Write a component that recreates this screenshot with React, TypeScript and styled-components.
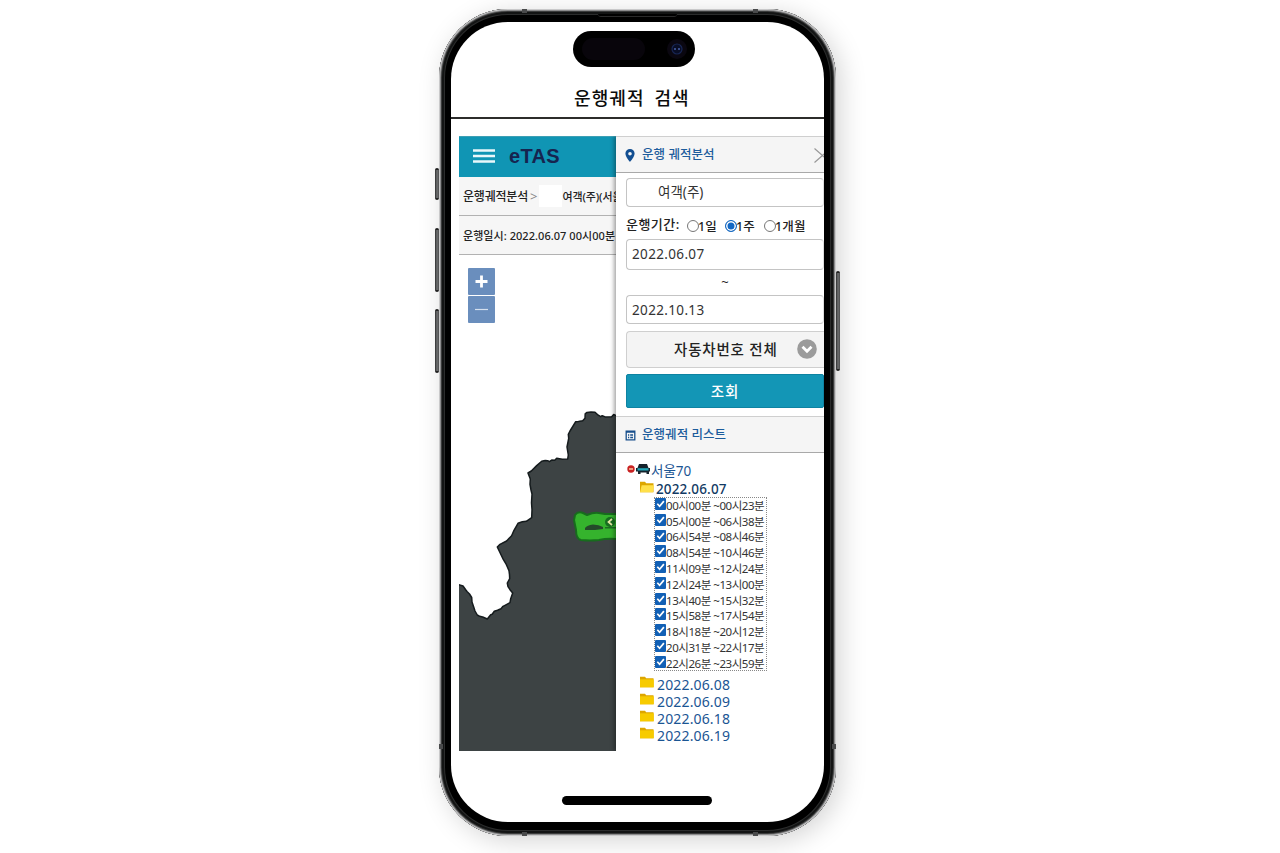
import React from 'react';
import styled, { createGlobalStyle } from 'styled-components';

const GlobalStyle = createGlobalStyle`
  * { box-sizing: border-box; }
  body { margin: 0; background: #fff; overflow: hidden; font-family: "Noto Sans", "Noto Sans CJK KR", sans-serif; color: #222; }
`;

const Page = styled.main`
  width: 1280px;
  height: 853px;
  padding: 9px 0 0 439px;
  overflow: hidden;
`;

const Phone = styled.div`
  position: relative;
  width: 397px;
  height: 827px;
  padding: 13px 12px 14px;
  border-radius: 69px;
  background: #000;
  border: 0;
  box-shadow:
    inset 0 0 0 1px #c9c9ca,
    inset 0 0 0 2px #8c8c8d,
    inset 0 0 0 3px #3a3b3b,
    inset 0 0 0 5px #131414,
    inset 0 0 0 6px #2b2c2c,
    5px 5px 26px rgba(0, 0, 0, 0.17);
`;

const SideKey = styled.i<{ $side: 'left' | 'right'; $top: number; $height: number }>`
  position: absolute;
  ${(p) => p.$side}: -4px;
  top: ${(p) => p.$top}px;
  width: 4px;
  height: ${(p) => p.$height}px;
  border-radius: 2px;
  background: linear-gradient(90deg, #2b2c2d, #707172 50%, #4b4c4d);
  border-top: 2px solid #222;
  border-bottom: 2px solid #222;
`;

const AntennaV = styled.i<{ $left: number; $bottom?: boolean }>`
  position: absolute;
  left: ${(p) => p.$left}px;
  ${(p) => (p.$bottom ? 'bottom' : 'top')}: 0;
  width: 5px;
  height: 4px;
  background: #4a4b4c;
`;

const AntennaH = styled.i<{ $side: 'left' | 'right' }>`
  position: absolute;
  ${(p) => p.$side}: 0;
  top: 735px;
  width: 4px;
  height: 5px;
  background: #4a4b4c;
`;

const Speaker = styled.i`
  position: absolute;
  left: 159px;
  top: 5px;
  width: 79px;
  height: 3px;
  border-radius: 0 0 3px 3px;
  background: #000;
  border-bottom: 1px solid #2a2a2a;
`;

const Screen = styled.div`
  display: flex;
  flex-direction: column;
  width: 373px;
  height: 800px;
  border-radius: 57px;
  background: #fff;
  overflow: hidden;
`;

const Island = styled.div`
  position: absolute;
  left: 134px;
  top: 22px;
  width: 122px;
  height: 36px;
  border-radius: 18px;
  background: #000;
  display: flex;
  align-items: center;
  justify-content: space-between;
  padding: 0 8px 0 9px;
`;

const Sensor = styled.span`
  width: 63px;
  height: 22px;
  border-radius: 11px;
  background: #08050b;
`;

const TitleBar = styled.header`
  flex: none;
  height: 97px;
  padding: 63px 0 0 123px;
  border-bottom: 2px solid #2c2c2a;
`;

const Title = styled.h1`
  margin: 0;
  font-size: 18px;
  line-height: 27px;
  font-weight: 500;
  letter-spacing: 1.1px;
  word-spacing: 4px;
  color: #0c0c0c;
  white-space: pre;
`;

const Content = styled.div`
  flex: none;
  display: flex;
  height: 615px;
  margin: 17px 0 0 8px;
  overflow: hidden;
`;

const MapPane = styled.section`
  position: relative;
  flex: none;
  width: 157px;
  display: flex;
  flex-direction: column;
  overflow: hidden;
`;

const BrandBar = styled.div`
  flex: none;
  height: 41px;
  display: flex;
  align-items: center;
  gap: 14px;
  padding: 0 0 2px 14px;
  background: #1095b4;
  border-top: 1px solid #3d9fb4;
`;

const Brand = styled.span`
  font: bold 20px/24px "Liberation Sans", sans-serif;
  letter-spacing: 0.35px;
  color: #16244f;
`;

const InfoRow = styled.div<{ $spacing: number }>`
  flex: none;
  height: 39px;
  display: flex;
  align-items: center;
  padding-left: 4px;
  background: #f6f6f6;
  border-bottom: 1px solid #b2b2b2;
  white-space: nowrap;
  font-size: 11px;
  font-weight: 500;
  letter-spacing: ${(p) => p.$spacing}px;
  color: #222;
`;

const Crumb = styled.b`
  font-weight: 500;
  font-size: 12px;
  letter-spacing: -0.2px;
`;

const CrumbArrow = styled.span`
  margin-left: 2px;
  font-size: 13px;
  font-weight: 400;
  color: #888;
`;

const Blank = styled.span`
  flex: none;
  width: 23px;
  height: 22px;
  margin: 0 0 0 2px;
  background: #fff;
`;

const MapArea = styled.div`
  position: relative;
  flex: 1;
`;

const ZoomStack = styled.div`
  position: absolute;
  left: 9px;
  top: 13px;
  display: grid;
  gap: 1px;
`;

const ZoomButton = styled.button`
  display: grid;
  place-items: center;
  width: 27px;
  height: 27px;
  padding: 0;
  border: 0;
  border-radius: 1px;
  background: #6a8ebd;
`;

const Panel = styled.aside`
  position: relative;
  flex: 1;
  background: #fff;
  box-shadow: -2px 0 4px rgba(0, 0, 0, 0.35);
`;

const PanelHead = styled.div<{ $height: number }>`
  display: flex;
  align-items: center;
  height: ${(p) => p.$height}px;
  padding: 1px 0 0 9px;
  background: #f5f5f5;
  border-top: 1px solid #cfcfcf;
  border-bottom: 1px solid #a9a9a9;
  overflow: hidden;
`;

const HeadIcon = styled.span`
  display: flex;
  flex: none;
  width: 17px;
`;

const HeadText = styled.h2`
  flex: 1;
  margin: 0;
  font-size: 12.5px;
  line-height: 18px;
  font-weight: 500;
  letter-spacing: 0.05px;
  color: #1c5c9c;
  white-space: nowrap;
`;

const Form = styled.div`
  display: flex;
  flex-direction: column;
  padding: 5px 0 8px 10px;
`;

const Field = styled.div<{ $height: number; $indent?: number; $drop?: number; $spacing?: number }>`
  display: flex;
  align-items: center;
  height: ${(p) => p.$height}px;
  padding: 0 0 ${(p) => p.$drop ?? 2}px ${(p) => p.$indent ?? 5}px;
  border: 1px solid #c4c4c4;
  border-right-color: #ddd;
  border-radius: 4px;
  font-size: 13.5px;
  letter-spacing: ${(p) => p.$spacing ?? 0.35}px;
  color: #333;
  white-space: nowrap;
`;

const Period = styled.div`
  display: flex;
  align-items: center;
  height: 32px;
  padding-top: 4px;
  font-size: 12.5px;
  white-space: nowrap;
`;

const PeriodLabel = styled.span`
  width: 60px;
  margin-top: -4px;
  font-size: 13px;
  font-weight: 500;
  letter-spacing: 0.45px;
`;

const Choice = styled.label<{ $width: number }>`
  display: flex;
  align-items: center;
  width: ${(p) => p.$width}px;
  font-weight: 500;
  letter-spacing: 0.2px;
`;

const Radio = styled.i<{ $on?: boolean }>`
  display: block;
  flex: none;
  width: 12px;
  height: 12px;
  margin: 2px -1px 0 1px;
  border-radius: 50%;
  border: 1px solid ${(p) => (p.$on ? '#1769c0' : '#777')};
  background: ${(p) => (p.$on ? '#1267c4' : '#fff')};
  box-shadow: inset 0 0 0 1.5px #fff;
`;

const Between = styled.div`
  height: 25px;
  text-align: center;
  font-size: 13px;
  line-height: 25px;
`;

const SelectBox = styled.div`
  display: flex;
  align-items: center;
  height: 37px;
  margin-top: 7px;
  padding: 0 7px 2px 47px;
  border: 1px solid #cfcfcf;
  border-right: 0;
  border-radius: 4px 0 0 4px;
  background: #f4f4f4;
  font-size: 14.5px;
  font-weight: 500;
  white-space: nowrap;
  justify-content: space-between;
  letter-spacing: 0.8px;
`;

const SearchButton = styled.button`
  height: 34px;
  margin-top: 6px;
  padding: 0;
  border: 1px solid #0e83a2;
  border-radius: 2px;
  background: #1396b6;
  color: #fff;
  font: 500 14.5px/20px "Noto Sans", "Noto Sans CJK KR", sans-serif;
  letter-spacing: 0.8px;
`;

const Tree = styled.div`
  display: flex;
  flex-direction: column;
  padding: 9px 0 0 11px;
  color: #1b4f8d;
`;

const TreeRow = styled.div<{ $indent?: number; $height: number; $root?: boolean; $open?: boolean }>`
  display: flex;
  align-items: center;
  height: ${(p) => p.$height}px;
  padding-left: ${(p) => p.$indent ?? 0}px;
  font-size: ${(p) => (p.$root || p.$open ? 13.5 : 14)}px;
  font-weight: ${(p) => (p.$open ? 500 : 400)};
  letter-spacing: ${(p) => (p.$root ? 0 : 0.15)}px;
  color: ${(p) => (p.$open ? '#123a63' : '#1b5593')};
  white-space: nowrap;
  svg { flex: none; }
`;

const RowText = styled.span<{ $dx?: number; $dy?: number }>`
  padding-left: ${(p) => p.$dx ?? 0}px;
  margin-top: ${(p) => p.$dy ?? 0}px;
`;

const TripList = styled.div`
  width: 113px;
  height: 174px;
  margin: 0 0 5px 27px;
  border: 1px dotted #888;
`;

const Trip = styled.label`
  display: flex;
  align-items: center;
  height: 15.8px;
  font-size: 11.5px;
  letter-spacing: -0.45px;
  color: #333;
  white-space: nowrap;
  svg { flex: none; margin-bottom: 4px; }
  span { margin-top: -2px; }
`;

const HomeBar = styled.i`
  flex: none;
  width: 150px;
  height: 9px;
  margin: 45px 0 0 111px;
  border-radius: 5px;
  background: #000;
`;

const trips = [
  '00시00분 ~00시23분', '05시00분 ~06시38분', '06시54분 ~08시46분', '08시54분 ~10시46분',
  '11시09분 ~12시24분', '12시24분 ~13시00분', '13시40분 ~15시32분', '15시58분 ~17시54분',
  '18시18분 ~20시12분', '20시31분 ~22시17분', '22시26분 ~23시59분',
];

const days = ['2022.06.08', '2022.06.09', '2022.06.18', '2022.06.19'];

const Lens = () => (
  <svg width="20" height="20" viewBox="0 0 20 20">
    <circle cx="10" cy="10" r="10" fill="#0a0710" />
    <circle cx="10" cy="10" r="5" fill="#080d25" stroke="#182653" strokeWidth="1.2" />
    <circle cx="8" cy="10" r="1" fill="#4960a8" />
    <circle cx="12" cy="10" r="1" fill="#4960a8" />
  </svg>
);

const IconFolder = styled.svg<{ $lift: number }>`
  margin-bottom: ${(p) => p.$lift}px;
`;

const Folder = ({ open }: { open?: boolean }) => (
  <IconFolder $lift={open ? 3 : 5} width="17" height="14" viewBox="0 0 17 14">
    <path d="M1 1.700h5l1.200 1.500H14.500v9H1z" fill="#dda600" />
    {open ? <path d="M1 12.200 2.700 5.300h12.300L14 12.200z" fill="#ffe04a" /> : <path d="M1 4.300h13.800v8H1z" fill="#f7cb00" />}
  </IconFolder>
);

const Check = () => (
  <svg width="11" height="12" viewBox="0 0 11 12">
    <rect width="11" height="12" rx="1" fill="#1260b5" />
    <path d="m2.3 5.7 2.3 2.6 4.3-5.2" fill="none" stroke="#fff" strokeWidth="1.7" />
  </svg>
);

const MapDrawing = styled.svg`
  display: block;
`;

const RegionMap = () => (
  <MapDrawing width="157" height="496" viewBox="0 0 157 496">
    <path
      d="M-1 329.500 4 331l2.500 3.500 1.500 2 2.500 2.500 2.200 3.500.3 4.500 1.700 5 1.300 4 2.300 4 2.400 1.300 3 .7 4.600 2 3.400-4.300 1.500-.4 2.100-3 3.200-1 3.500-1.600 2-2.400 2-1 5-2.600.7-4 2-5.700-2.700-3.300-2-3-.7-3.700 2.400-4.300-.2-4-.5-4-2.600-6-3.700-6.400L38.300 292l2.700-2.700 6.600-3.300 5-5.300 2.400-5.400 4-7 4.300-1.500 4-.5 5.400-3.600.3-8-.5-7 .5-8.700-1-4-1-5.700.3-5.300-2.300-6 3.300-2 5.400-5.400 5-4.300 3.500-.8 2.500.2 1.600 1 2.400-1.600 3 .2 2-2 5.600 1 5.400-.3.600-4-1.300-8 1.700-8.700-.4-4 1.700-3.300 5.700-9.300 2.700-.2 4.300-.8 2.300-2.500.2-4.300 1.800-1.500 4-.4 4 .2 3.300 3 2.400 1.500 1.500-1 3 1.200 6.500-.1 2-2.400 4.300 2V497H-1z"
      fill="#3d4344" stroke="#151b1d" strokeWidth="1.5" strokeLinejoin="round"
    />
    <path
      d="M116 260q3-4 8-2l4 2q7-3 12-2l6 1h12v25q-10-1-18 1-9 1-18 0-5-1-5-10l-2-10z"
      fill="#35b32d" stroke="#176c1d" strokeWidth="2" strokeLinejoin="round"
    />
    <path d="M126 273q2-3 8-3.500 6 0 10 2.500v2l-8 1h-10z" fill="#244a2a" />
    <path d="M146 272h12v1.500h-12z" fill="#1d6b22" />
    <circle cx="151" cy="267" r="5" fill="#176d20" />
    <path d="m153 264-3.500 3 3.500 3" fill="none" stroke="#e7e6a5" strokeWidth="1.700" />
  </MapDrawing>
);

export default function App() {
  return (
    <>
      <GlobalStyle />
      <Page>
        <Phone>
          <SideKey $side="left" $top={159} $height={32} />
          <SideKey $side="left" $top={219} $height={64} />
          <SideKey $side="left" $top={300} $height={64} />
          <SideKey $side="right" $top={262} $height={100} />
          <AntennaV $left={83} />
          <AntennaV $left={314} />
          <AntennaV $left={83} $bottom />
          <AntennaV $left={314} $bottom />
          <AntennaH $side="left" />
          <AntennaH $side="right" />
          <Speaker />
          <Screen>
            <TitleBar><Title>운행궤적 검색</Title></TitleBar>
            <Content>
              <MapPane>
                <BrandBar>
                  <svg width="22" height="14" viewBox="0 0 22 14">
                    <path d="M0 1.5h22M0 7h22M0 12.5h22" stroke="#e9f7fa" strokeWidth="2.4" />
                  </svg>
                  <Brand>eTAS</Brand>
                </BrandBar>
                <InfoRow $spacing={-0.1}>
                  <Crumb>운행궤적분석</Crumb><CrumbArrow>&gt;</CrumbArrow><Blank />여객(주)(서울
                </InfoRow>
                <InfoRow $spacing={0.05}>운행일시: 2022.06.07 00시00분</InfoRow>
                <MapArea>
                  <RegionMap />
                  <ZoomStack>
                    <ZoomButton aria-label="확대">
                      <svg width="13" height="13" viewBox="0 0 13 13"><path d="M6.5 .5v12M.5 6.5h12" stroke="#fff" strokeWidth="2.8" /></svg>
                    </ZoomButton>
                    <ZoomButton aria-label="축소">
                      <svg width="13" height="13" viewBox="0 0 13 13"><path d="M0 6.5h13" stroke="#d5e0ee" strokeWidth="1.2" /></svg>
                    </ZoomButton>
                  </ZoomStack>
                </MapArea>
              </MapPane>
              <Panel>
                <PanelHead $height={37}>
                  <HeadIcon>
                    <svg width="10" height="13" viewBox="0 0 10 13">
                      <path fillRule="evenodd" d="M5 0a4.6 4.6 0 0 0-4.6 4.6C.4 8 5 13 5 13s4.600-5 4.600-8.400A4.600 4.600 0 0 0 5 0zm0 3a1.800 1.800 0 1 1 0 3.600A1.800 1.800 0 0 1 5 3z" fill="#124e91" />
                    </svg>
                  </HeadIcon>
                  <HeadText>운행 궤적분석</HeadText>
                  <svg width="10" height="17" viewBox="0 0 10 17"><path d="m.5 1.500 8 7-8 7M10 6.800 8.500 8.500l1.500 1.700" fill="none" stroke="#999" strokeWidth="1.200" /></svg>
                </PanelHead>
                <Form>
                  <Field $height={29} $indent={31} $drop={3} $spacing={0}>여객(주)</Field>
                  <Period>
                    <PeriodLabel>운행기간:</PeriodLabel>
                    <Choice $width={38}><Radio />1일</Choice>
                    <Choice $width={39}><Radio $on />1주</Choice>
                    <Choice $width={50}><Radio />1개월</Choice>
                  </Period>
                  <Field $height={31}>2022.06.07</Field>
                  <Between>~</Between>
                  <Field $height={29} $drop={0}>2022.10.13</Field>
                  <SelectBox>
                    자동차번호 전체
                    <svg width="20" height="20" viewBox="0 0 20 20">
                      <circle cx="10" cy="10" r="9.800" fill="#9b9b9b" />
                      <path d="m5.500 7.800 4.500 4.500 4.500-4.500" fill="none" stroke="#fff" strokeWidth="2.800" />
                    </svg>
                  </SelectBox>
                  <SearchButton>조회</SearchButton>
                </Form>
                <PanelHead $height={37}>
                  <HeadIcon>
                    <svg width="11" height="11" viewBox="0 0 11 11">
                      <path d="M1.200 1.200h8.600v8.600H1.200zM1.200 2h8.600M3 5h1.200M5.200 5H8M3 7.500h1.200M5.200 7.500H8" fill="none" stroke="#184f8c" strokeWidth="1.300" />
                    </svg>
                  </HeadIcon>
                  <HeadText>운행궤적 리스트</HeadText>
                </PanelHead>
                <Tree>
                  <TreeRow $height={17} $root>
                    <svg width="24" height="14" viewBox="0 0 24 14">
                      <circle cx="4" cy="5" r="3.700" fill="#c92222" />
                      <path d="M2 5h4" stroke="#ffe1b0" strokeWidth="1.300" />
                      <path d="M12 0h8l1.500 4h1.500v3.500h-1V10h-2.500V8.500h-6V10H11V7.500H9V4h1.500z" fill="#15222c" />
                      <path d="M10.500 4.200h11V6.500h-11z" fill="#23a8ba" />
                    </svg>
                    <RowText $dy={-2}>서울70</RowText>
                  </TreeRow>
                  <TreeRow $height={18} $indent={12} $open><Folder open /><RowText $dy={1}>2022.06.07</RowText></TreeRow>
                  <TripList>
                    {trips.map((t) => <Trip key={t}><Check /><span>{t}</span></Trip>)}
                  </TripList>
                  {days.map((d) => <TreeRow key={d} $height={17} $indent={12}><Folder /><RowText $dx={1}>{d}</RowText></TreeRow>)}
                </Tree>
              </Panel>
            </Content>
            <HomeBar />
          </Screen>
          <Island><Sensor /><Lens /></Island>
        </Phone>
      </Page>
    </>
  );
}
